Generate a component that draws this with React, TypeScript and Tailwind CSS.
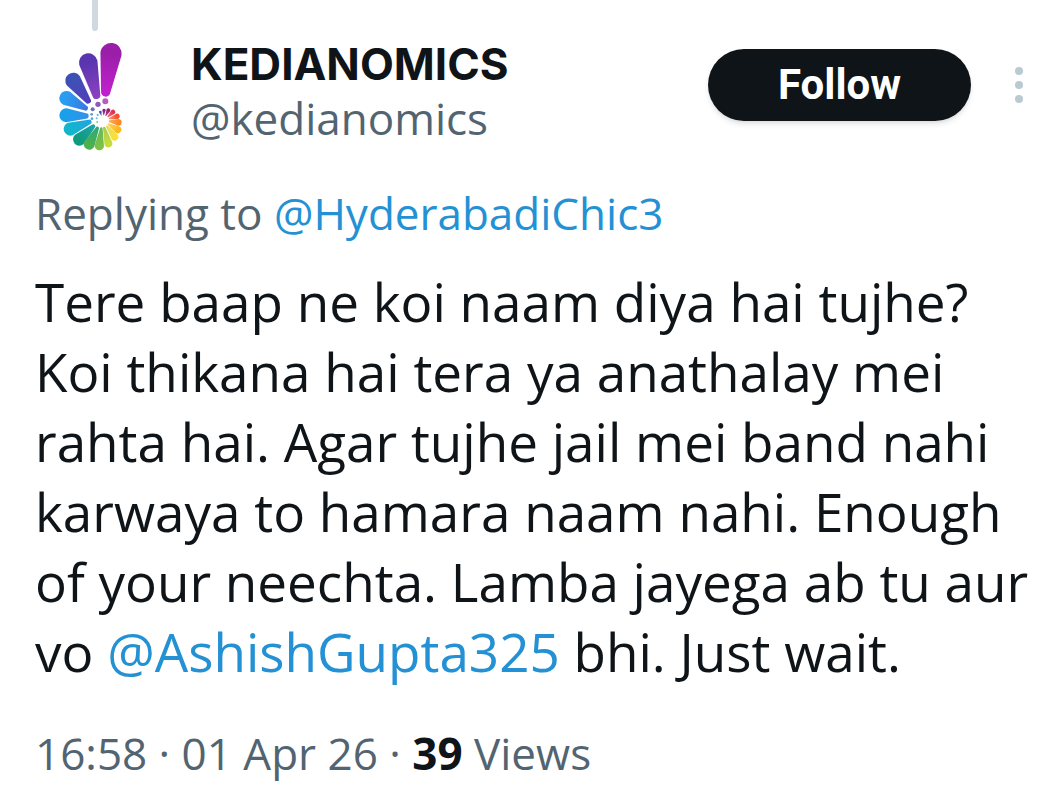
type Petal = {
  tip: [number, number]
  r: number
  root: [number, number]
  w: number
  from: string
  to: string
}

const petals: Petal[] = [
  { tip: [213, 161], r: 32, root: [197, 276], w: 14, from: '#9a1fa8', to: '#c020cc' },
  { tip: [145, 188], r: 28, root: [169, 285], w: 12, from: '#5a35b0', to: '#8a40c0' },
  { tip: [100, 242], r: 24, root: [144, 302], w: 9, from: '#3f50b5', to: '#5240b8' },
  { tip: [80, 295], r: 22, root: [136, 324], w: 8, from: '#2b9cf0', to: '#3a7ae0' },
  { tip: [79, 346], r: 21, root: [138, 348], w: 8, from: '#1aa0ea', to: '#3590e8' },
  { tip: [91, 387], r: 20, root: [148, 366], w: 7, from: '#12b5cc', to: '#22a5e0' },
  { tip: [118, 418], r: 19, root: [160, 379], w: 6, from: '#0f9a80', to: '#18a5a5' },
  { tip: [148, 432], r: 17, root: [172, 385], w: 5, from: '#4cb04f', to: '#30a878' },
  { tip: [178, 437], r: 14, root: [184, 386], w: 4, from: '#7cc04a', to: '#68b85a' },
  { tip: [205, 430], r: 12, root: [193, 384], w: 4, from: '#c8dc3c', to: '#a8cc50' },
  { tip: [224, 411], r: 11, root: [201, 379], w: 3, from: '#f8e038', to: '#e0dc60' },
  { tip: [233, 389], r: 11, root: [206, 373], w: 3, from: '#fcb81c', to: '#fcd060' },
  { tip: [235, 367], r: 10, root: [209, 364], w: 3, from: '#fc8a20', to: '#fca860' },
  { tip: [231, 349], r: 8, root: [208, 356], w: 2, from: '#f4502c', to: '#f89070' },
  { tip: [219, 336], r: 7, root: [204, 350], w: 2, from: '#e0304c', to: '#f07080' },
  { tip: [205, 331], r: 6, root: [198, 346], w: 2, from: '#a8186c', to: '#c04088' },
  { tip: [192, 331], r: 5, root: [191, 345], w: 1, from: '#702090', to: '#9050a8' },
  { tip: [181, 336], r: 4, root: [184, 346], w: 1, from: '#4050b0', to: '#7078c0' },
]

const beads = [
  { x: 196, y: 304, r: 9, fill: '#b85cc0' },
  { x: 174, y: 313, r: 8, fill: '#8a5cb8' },
  { x: 158, y: 328, r: 6, fill: '#6870b8' },
  { x: 155, y: 343, r: 4, fill: '#6098d0' },
  { x: 156, y: 356, r: 4, fill: '#58a8d0' },
  { x: 173, y: 345, r: 3, fill: '#60a0d8' },
  { x: 170, y: 355, r: 3, fill: '#60c0d8' },
  { x: 172, y: 366, r: 3, fill: '#70c8b0' },
]

// rounded wedge: wide at the tip, narrow towards the hub
function petalPath({ tip, r, root, w }: Petal) {
  const dx = root[0] - tip[0]
  const dy = root[1] - tip[1]
  const len = Math.hypot(dx, dy)
  const nx = -dy / len
  const ny = dx / len
  return [
    `M${tip[0] + nx * r} ${tip[1] + ny * r}`,
    `A${r} ${r} 0 0 1 ${tip[0] - nx * r} ${tip[1] - ny * r}`,
    `L${root[0] - nx * w} ${root[1] - ny * w}`,
    `A${w} ${w} 0 0 1 ${root[0] + nx * w} ${root[1] + ny * w}Z`,
  ].join('')
}

function Avatar() {
  return (
    <svg viewBox="-15 111 360 360" className="size-[120px] shrink-0" role="img" aria-label="Kedianomics">
      <defs>
        {petals.map((p, i) => (
          <linearGradient
            key={i}
            id={`petal-${i}`}
            gradientUnits="userSpaceOnUse"
            x1={p.tip[0]}
            y1={p.tip[1]}
            x2={p.root[0]}
            y2={p.root[1]}
          >
            <stop offset="0" stopColor={p.from} />
            <stop offset="1" stopColor={p.to} />
          </linearGradient>
        ))}
      </defs>
      {petals.map((p, i) => (
        <path key={i} d={petalPath(p)} fill={`url(#petal-${i})`} />
      ))}
      {beads.map((b) => (
        <circle key={b.x} cx={b.x} cy={b.y} r={b.r} fill={b.fill} />
      ))}
    </svg>
  )
}

function Mention({ handle }: { handle: string }) {
  return (
    <a href={`#${handle}`} className="text-[#2491d4]">
      @{handle}
    </a>
  )
}

export default function App() {
  return (
    <article className="min-h-screen bg-white pr-[33px] pb-6 pl-[35px] font-['Open_Sans',sans-serif] text-[#0f1419]">
      <div className="flex w-[120px] justify-center">
        <div className="h-[31px] w-[6px] rounded-b-full bg-[#cfd9de]" />
      </div>

      <header className="mt-[6px] flex items-start">
        <Avatar />
        <div className="ml-9 min-w-0 flex-1 text-[44px] leading-[54px]">
          <h1 className="font-['Inter',sans-serif] font-bold">KEDIANOMICS</h1>
          <p className="text-[#536471]">@kedianomics</p>
        </div>
        <button
          type="button"
          className="mt-3 h-[72px] w-[263px] rounded-full bg-[#0f1419] font-['Roboto',sans-serif] text-[42px] leading-[48px] font-bold text-white shadow-md"
        >
          Follow
        </button>
        <button type="button" aria-label="More" className="mt-3 ml-9 flex h-[72px] w-6 items-center justify-center">
          <svg viewBox="0 0 8 36" className="h-9 w-2 fill-[#b9cad3]">
            <circle cx="4" cy="4" r="4" />
            <circle cx="4" cy="18" r="4" />
            <circle cx="4" cy="32" r="4" />
          </svg>
        </button>
      </header>

      <p className="mt-[26px] text-[44px] leading-[60px] text-[#536471]">
        Replying to <Mention handle="HyderabadiChic3" />
      </p>

      <p className="mt-6 text-[53px] leading-[70px] whitespace-nowrap">
        Tere baap ne koi naam diya hai tujhe?
        <br />
        Koi thikana hai tera ya anathalay mei
        <br />
        rahta hai. Agar tujhe jail mei band nahi
        <br />
        karwaya to hamara naam nahi. Enough
        <br />
        of your neechta. Lamba jayega ab tu aur
        <br />
        vo <Mention handle="AshishGupta325" /> bhi. Just wait.
      </p>

      <p className="mt-9 text-[44px] leading-[60px] text-[#536471]">
        16:58 · 01 Apr 26 · <strong className="font-bold text-[#0f1419]">39</strong> Views
      </p>
    </article>
  )
}
